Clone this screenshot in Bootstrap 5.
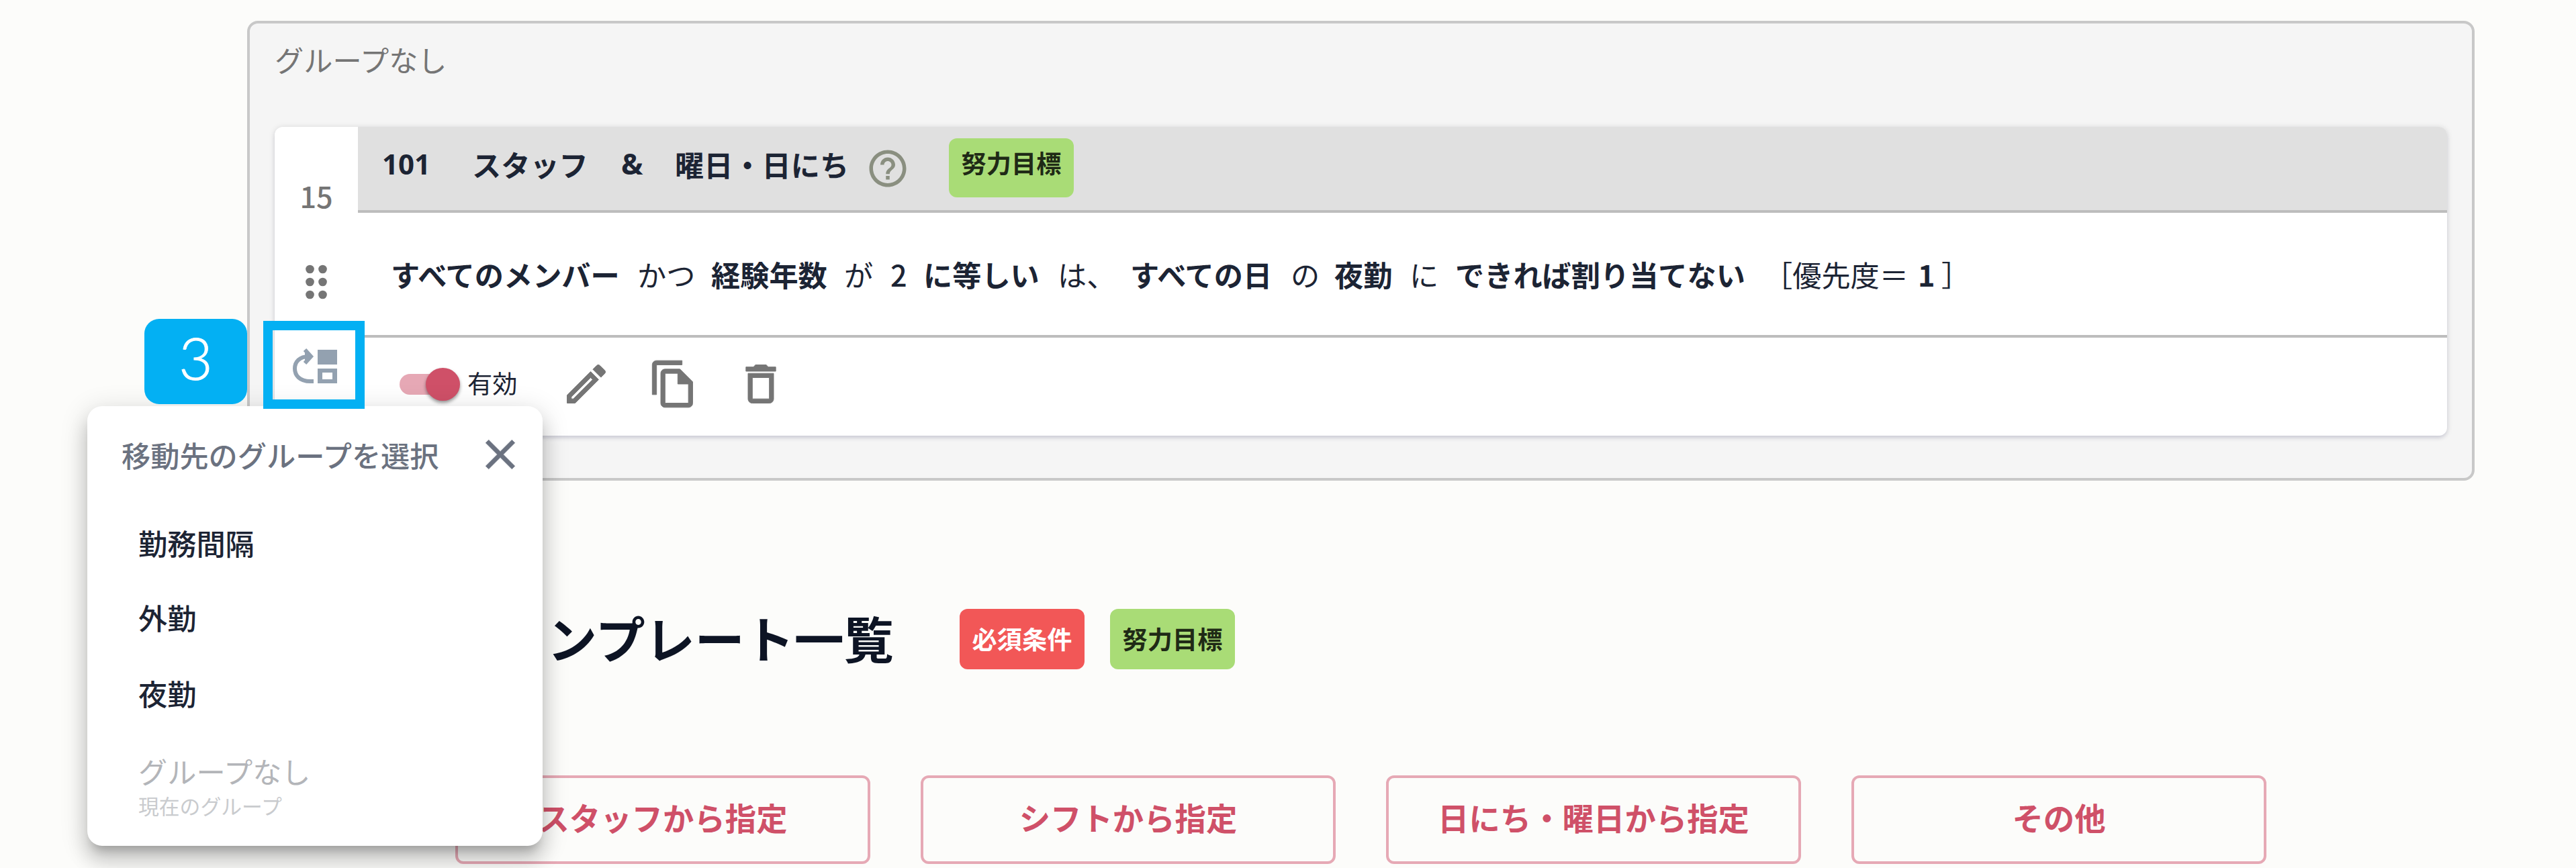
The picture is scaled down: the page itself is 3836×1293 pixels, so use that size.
<!DOCTYPE html>
<html lang="ja">
<head>
<meta charset="utf-8">
<title>条件一覧</title>
<link href="https://cdn.jsdelivr.net/npm/bootstrap@5.3.0/dist/css/bootstrap.min.css" rel="stylesheet">
<style>
body{background:#fcfcfa;color:#1c2434;font-family:"Noto Sans CJK JP",sans-serif;font-size:43.2px;line-height:60px;width:3836px;height:1293px;overflow:hidden}
svg{display:block;fill:currentColor;flex:none}
.group-box{margin:31px 0 0 368px;width:3317px;height:685px;border:4px solid #c8c8c8;border-radius:16px;background:#f5f5f5;padding:23px 35px 0 37px}
.group-name{color:#757575;height:60px;margin-bottom:71px}
.rule-card{width:3235px;height:460px;background:#fff;border-radius:12px;box-shadow:0 4px 6px -2px #c9c9d6,0 1px 10px #0002;overflow:hidden}
.rule-side{width:124px;color:#757575;padding-top:72px}
.rule-head{height:128px;background:#e0e0e0;border-bottom:4px solid #bdbdbd;padding:17px 0 0 36px;font-weight:700}
.rule-head .txt{height:60px;margin-top:8px;white-space:pre}
.latin{font-family:"Noto Sans","Noto Sans CJK JP",sans-serif}
.tag{width:186px;height:88px;border-radius:12px;font-size:37.2px;font-weight:700;line-height:72px;text-align:center;background:#a9dc76;color:#1f2a16}
.tag-lg{height:90px;line-height:88px}
.tag-red{background:#f25757;color:#fff}
.rule-body{height:186px;border-bottom:4px solid #bdbdbd;padding:61px 0 0 49px;white-space:pre}
.rule-body span{display:block;flex:none}
.rule-acts{color:#757575;padding:31px 0 0 62px;height:146px}
.switch-track{width:84px;height:31px;border-radius:16px;background:#e6a8b5;display:flex;align-items:center}
.switch-knob{flex:none;width:51px;height:49px;border-radius:50%;background:#cf5068;margin-left:39px;box-shadow:0 3px 5px #0006}
.tmpl-head{margin:191px 0 0 736px;height:90px}
.tmpl-title{font-size:74px;line-height:84px;font-weight:700;color:#0d1424;width:693px;margin:0}
.tmpl-title span{margin-right:5px}
.tmpl-btns{margin:158px 0 0 678px;gap:75px}
.tmpl-btns .btn{width:618px;height:132px;border:4px solid #e6a9b5;border-radius:12px;color:#cf5068;font-size:46.4px;font-weight:700;line-height:60px;padding:0 0 8px}
.move-menu{position:absolute;left:130px;top:605px;width:678px;height:655px;background:#fff;border-radius:22px;box-shadow:0 14px 14px -8px #0003,0 22px 28px 3px #00000024,0 8px 38px 5px #0000001f;padding:42px 26px 0 51px}
.menu-title{color:#6b7280;font-weight:500}
.menu-list{padding-left:25px;font-weight:500;margin-top:53px}
.menu-list div{white-space:nowrap}
.menu-off{color:#b3b5b9;font-weight:400}
.menu-sub{font-size:30.8px;line-height:44px;color:#c9cbce;font-weight:400}
.step-no{position:absolute;left:215px;top:475px;width:153px;height:127px;border-radius:22px;background:#03b0f3;color:#fff;font:300 87px/115px Lato,sans-serif;text-align:center;-webkit-text-stroke:1px #fff}
.step-frame{position:absolute;left:392px;top:478px;width:151px;height:131px;border:14px solid #03b0f3}
</style>
<script src="https://cdn.jsdelivr.net/npm/bootstrap@5.3.0/dist/js/bootstrap.bundle.min.js"></script>
</head>
<body class="position-relative">
<section class="group-box">
  <div class="group-name">グループなし</div>
  <div class="rule-card d-flex">
    <div class="rule-side d-flex flex-column align-items-center">
      <span class="fw-medium">15</span>
      <svg width="76" height="64" viewBox="0 2 24 20" style="margin-top:67px"><circle cx="9" cy="6" r="2"/><circle cx="15" cy="6" r="2"/><circle cx="9" cy="12" r="2"/><circle cx="15" cy="12" r="2"/><circle cx="9" cy="18" r="2"/><circle cx="15" cy="18" r="2"/></svg>
      <svg width="66" height="52" viewBox="0 0 66 52" color="#93a1b0" style="margin-top:67px;margin-right:4px"><path d="M37 2h29v22H37zM37 30h29v22H37zM44 36v10h15v-10z" fill-rule="evenodd"/><path d="M31 49H26C10 49 3 40 3 30S10 12 24 12M18 2l9 10-9 10" fill="none" stroke="currentColor" stroke-width="6"/><path d="M18 4l11 8-11 8z"/></svg>
    </div>
    <div class="flex-grow-1">
      <div class="rule-head d-flex">
        <div class="txt latin" style="width:134px;font-size:42px">101</div>
        <div class="txt" style="width:222px">スタッフ</div>
        <div class="txt latin" style="width:80px">&amp;</div>
        <div class="txt" style="width:284px">曜日・日にち</div>
        <svg width="66" height="66" viewBox="0 0 24 24" color="#8a8f80" style="margin-right:58px;margin-top:12px"><path d="M11 18h2v-2h-2v2zm1-16C6.480 2 2 6.480 2 12s4.480 10 10 10 10-4.480 10-10S17.520 2 12 2zm0 18c-4.410 0-8-3.590-8-8s3.590-8 8-8 8 3.590 8 8-3.590 8-8 8zm0-14c-2.210 0-4 1.790-4 4h2c0-1.100.900-2 2-2s2 .900 2 2c0 2-3 1.750-3 5h2c0-2.250 3-2.500 3-5 0-2.210-1.790-4-4-4z"/></svg>
        <div class="tag">努力目標</div>
      </div>
      <div class="rule-body d-flex">
        <span class="fw-bold" style="width:367px">すべてのメンバー</span><span style="width:110px">かつ</span><span class="fw-bold" style="width:198px">経験年数</span><span style="width:69px">が</span><span class="fw-medium" style="width:49px">2</span><span class="fw-bold" style="width:200px">に等しい</span><span style="width:108px">は、</span><span class="fw-bold" style="width:239px">すべての日</span><span style="width:65px">の</span><span class="fw-bold" style="width:112px">夜勤</span><span style="width:68px">に</span><span class="fw-bold" style="width:459px">できれば割り当てない</span><span style="width:230px">［優先度＝</span><span class="fw-bold" style="width:35px">1</span><span>］</span>
      </div>
      <div class="rule-acts d-flex align-items-start">
        <div class="d-flex align-items-center" style="height:76px;width:240px"><div class="switch-track"><div class="switch-knob"></div></div><span style="font-size:37.200px;color:#1c2434;margin:-4px 0 0 17px">有効</span></div>
        <div class="d-flex" style="gap:54px">
          <svg width="76" height="76" viewBox="0 0 24 24" stroke="currentColor" stroke-width=".3"><path d="M14.060 9.020l.920.920L5.920 19H5v-.920l9.060-9.060M17.660 3c-.250 0-.510.100-.700.290l-1.830 1.830 3.750 3.750 1.830-1.830c.390-.390.390-1.020 0-1.410l-2.340-2.340c-.200-.200-.450-.290-.710-.290zm-3.600 3.190L3 17.250V21h3.750L17.810 9.940l-3.750-3.750z"/></svg>
          <svg width="76" height="76" viewBox="0 0 24 24" stroke="currentColor" stroke-width=".3"><path d="M16 1H4c-1.100 0-2 .900-2 2v14h2V3h12V1zm-1 4H8c-1.100 0-1.990.900-1.990 2L6 21c0 1.100.890 2 1.990 2H19c1.100 0 2-.900 2-2V11l-6-6zM8 21V7h6v5h5v9H8z"/></svg>
          <svg width="76" height="76" viewBox="0 0 24 24" stroke="currentColor" stroke-width=".3"><path d="M16 9v10H8V9h8m-1.500-6h-5l-1 1H5v2h14V4h-3.500l-1-1zM18 7H6v12c0 1.100.900 2 2 2h8c1.100 0 2-.900 2-2V7z"/></svg>
        </div>
      </div>
    </div>
  </div>
</section>
<section>
  <div class="tmpl-head d-flex">
    <h2 class="tmpl-title"><span>テ</span>ンプレート一覧</h2>
    <div class="tag tag-lg tag-red" style="margin-right:38px">必須条件</div>
    <div class="tag tag-lg">努力目標</div>
  </div>
  <div class="tmpl-btns d-flex">
    <button class="btn">スタッフから指定</button>
    <button class="btn">シフトから指定</button>
    <button class="btn">日にち・曜日から指定</button>
    <button class="btn">その他</button>
  </div>
</section>
<div class="move-menu">
  <div class="menu-title d-flex justify-content-between align-items-center" style="height:60px">移動先のグループを選択
    <svg width="74" height="74" viewBox="0 0 24 24" stroke="currentColor" stroke-width=".3"><path d="M19 6.410L17.590 5 12 10.590 6.410 5 5 6.410 10.590 12 5 17.590 6.410 19 12 13.410 17.590 19 19 17.590 13.410 12z"/></svg>
  </div>
  <div class="menu-list d-flex flex-column">
    <div style="margin:18px 0 51px">勤務間隔</div>
    <div style="margin-bottom:53px">外勤</div>
    <div style="margin-bottom:56px">夜勤</div>
    <div class="menu-off">グループなし</div>
    <div class="menu-sub">現在のグループ</div>
  </div>
</div>
<div class="step-no">3</div>
<div class="step-frame"></div>
</body>
</html>
